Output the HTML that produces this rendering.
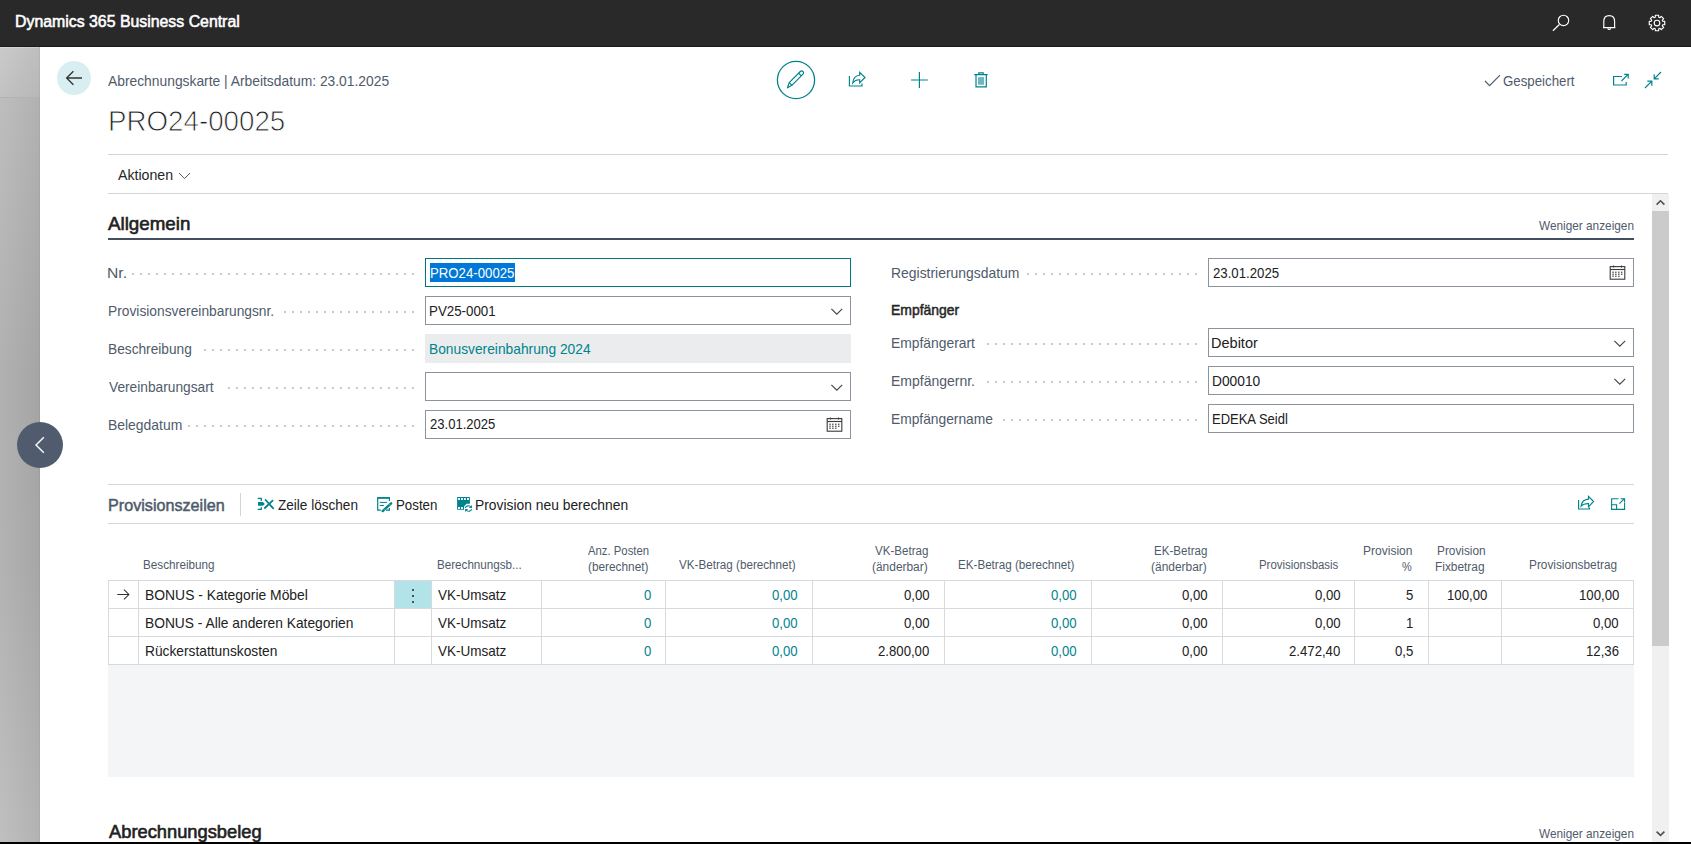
<!DOCTYPE html>
<html><head><meta charset="utf-8">
<style>
*{box-sizing:border-box;margin:0;padding:0}
html,body{width:1691px;height:844px;overflow:hidden;background:#fff;font-family:"Liberation Sans",sans-serif;color:#212121}
.a{position:absolute;white-space:nowrap;line-height:20px}
svg.a{overflow:visible}
</style></head><body>
<div class="a" style="left:0px;top:0px;width:1691px;height:46px;background:#292929"></div>
<div class="a" style="left:0px;top:46px;width:1691px;height:1px;background:#1b1b1b"></div>
<div class="a" style="left:14.51px;top:12.46px;font-size:16px;color:#fff;font-weight:400;transform-origin:0 0;transform:scaleX(0.9911);-webkit-text-stroke:0.55px #fff">Dynamics 365 Business Central</div>
<svg class="a" style="left:1550px;top:12px" width="22" height="22" viewBox="0 0 22 22"><circle cx="13.5" cy="8.4" r="5.2" fill="none" stroke="#fff" stroke-width="1.15"/><path d="M9.4 12.5 L2.9 18.8" stroke="#fff" stroke-width="1.2"/></svg>
<svg class="a" style="left:1598px;top:12px" width="22" height="22" viewBox="0 0 22 22"><path d="M5 15.6 H17.4 M5.8 15.6 V9.6 C5.8 5.8 8 3.7 11.2 3.7 C14.4 3.7 16.6 5.8 16.6 9.6 V15.6" fill="none" stroke="#fff" stroke-width="1.15"/><path d="M9.9 16.2 A1.3 1.3 0 0 0 12.5 16.2" fill="none" stroke="#fff" stroke-width="1.1"/></svg>
<svg class="a" style="left:1646px;top:12px" width="22" height="22" viewBox="0 0 22 22"><g fill="none" stroke="#fff" stroke-width="1.15" stroke-linejoin="round"><circle cx="11" cy="11" r="2.8"/><path d="M16.74 9.25 L18.73 9.36 L18.73 12.64 L16.74 12.75 L16.30 13.82 L17.63 15.30 L15.30 17.63 L13.82 16.30 L12.75 16.74 L12.64 18.73 L9.36 18.73 L9.25 16.74 L8.18 16.30 L6.70 17.63 L4.37 15.30 L5.70 13.82 L5.26 12.75 L3.27 12.64 L3.27 9.36 L5.26 9.25 L5.70 8.18 L4.37 6.70 L6.70 4.37 L8.18 5.70 L9.25 5.26 L9.36 3.27 L12.64 3.27 L12.75 5.26 L13.82 5.70 L15.30 4.37 L17.63 6.70 L16.30 8.18 Z"/></g></svg>
<div class="a" style="left:0px;top:47px;width:40px;height:797px;background:linear-gradient(to right,rgba(255,255,255,0.04),rgba(0,0,0,0.055)),linear-gradient(to bottom,#c4c4c4 0px,#bbbbbb 55px,#aeaeae 330px,#b0b0b0 520px,#bdbdbd 797px)"></div>
<div class="a" style="left:0px;top:47px;width:40px;height:50px;background:rgba(255,255,255,0.07)"></div>
<div class="a" style="left:0px;top:97px;width:40px;height:1px;background:#b2b2b2"></div>
<div class="a" style="left:39px;top:47px;width:1px;height:797px;background:rgba(0,0,0,0.04)"></div>
<div class="a" style="left:0px;top:47px;width:39px;height:1px;background:rgba(255,255,255,0.25)"></div>
<div class="a" style="left:17px;top:422px;width:46px;height:46px;border-radius:50%;background:#505c6d"></div>
<svg class="a" style="left:17px;top:422px" width="46" height="46" viewBox="0 0 46 46"><path d="M26.8 15.2 L19 23 L26.8 30.8" fill="none" stroke="#fff" stroke-width="1.4"/></svg>
<div class="a" style="left:57px;top:61px;width:34px;height:34px;border-radius:50%;background:#d8eef1"></div>
<svg class="a" style="left:57px;top:61px" width="34" height="34" viewBox="0 0 34 34"><path d="M9.6 17 H25 M16.4 10.2 L9.6 17 L16.4 23.8" fill="none" stroke="#333" stroke-width="1.3"/></svg>
<div class="a" style="left:108.30px;top:70.58px;font-size:13.9px;color:#4f5b6b;font-weight:400;transform-origin:0 0;transform:scaleX(0.9954);">Abrechnungskarte | Arbeitsdatum: 23.01.2025</div>
<div class="a" style="left:108px;top:104px;font-size:29.5px;line-height:34px;color:#1f1f1f;-webkit-text-stroke:0.9px #fff;transform-origin:0 0;transform:scaleX(0.94)">PRO24-00025</div>
<svg class="a" style="left:776px;top:60px" width="40" height="40" viewBox="0 0 40 40"><circle cx="20" cy="20" r="18.6" fill="none" stroke="#00838c" stroke-width="1.3"/><g fill="none" stroke="#00838c" stroke-width="1.2" stroke-linejoin="round"><path d="M11.5 27.8 L13.2 22.6 L24.3 11.5 A1.9 1.9 0 0 1 27 14.2 L15.9 25.3 Z"/><path d="M13.2 22.6 L15.9 25.3 M22.6 13.2 L25.3 15.9"/></g></svg>
<svg class="a" style="left:846px;top:70px" width="22" height="20" viewBox="0 0 22 20"><g fill="none" stroke="#00838c" stroke-width="1.15" stroke-linejoin="miter"><path d="M3.4 6 V16 H16 V13.4"/><path d="M19 7.5 L13.7 2.3 V5.3 C9.6 5.5 7.2 8.4 6.7 13 C8.6 10.6 11 9.6 13.7 9.8 V12.8 Z"/></g></svg>
<svg class="a" style="left:909px;top:70px" width="20" height="20" viewBox="0 0 20 20"><path d="M2 10 H18.8 M10.4 2 V18" stroke="#00838c" stroke-width="1.2"/></svg>
<svg class="a" style="left:971px;top:70px" width="20" height="20" viewBox="0 0 20 20"><g fill="none" stroke="#00838c" stroke-width="1.2"><path d="M3.3 4.6 H16.7 M7.8 4.3 V2.8 H12.2 V4.3 M5 4.6 V16.8 H15.3 V4.6"/></g><rect x="7" y="7.1" width="6" height="7.7" fill="#6cb9bd"/></svg>
<svg class="a" style="left:1483px;top:73px" width="20" height="16" viewBox="0 0 20 16"><path d="M2 8 L6.6 12.6 L17 2.2" fill="none" stroke="#4f5b6b" stroke-width="1.2"/></svg>
<div class="a" style="left:1503.00px;top:70.88px;font-size:14.2px;color:#4f5b6b;font-weight:400;transform-origin:0 0;transform:scaleX(0.9351);">Gespeichert</div>
<svg class="a" style="left:1610px;top:70px" width="22" height="20" viewBox="0 0 22 20"><g fill="none" stroke="#00838c" stroke-width="1.2"><path d="M12 6.5 H3.6 V15 H16.2 V12"/><path d="M11.5 11 L17.8 4.7 M14.2 4.4 H18.2 V8.4"/></g></svg>
<svg class="a" style="left:1642px;top:69px" width="22" height="22" viewBox="0 0 22 22"><g fill="none" stroke="#00838c" stroke-width="1.2"><path d="M19 3 L12.2 9.8 M12.2 5.3 V9.8 H16.7"/><path d="M3 19 L9.8 12.2 M5.3 12.2 H9.8 V16.7"/></g></svg>
<div class="a" style="left:108px;top:154px;width:1560px;height:1px;background:#d2d6db"></div>
<div class="a" style="left:117.50px;top:164.85px;font-size:14.3px;color:#262626;font-weight:400;transform-origin:0 0;transform:scaleX(0.9909);">Aktionen</div>
<svg class="a" style="left:178px;top:171px" width="13" height="9" viewBox="0 0 13 9"><path d="M1 2 L6.5 7.6 L12 2" fill="none" stroke="#555" stroke-width="1"/></svg>
<div class="a" style="left:108px;top:193px;width:1560px;height:1px;background:#d2d6db"></div>
<div class="a" style="left:1652px;top:194px;width:17px;height:650px;background:#f0f0f0"></div>
<div class="a" style="left:1652px;top:211px;width:17px;height:435px;background:#cbcbcb"></div>
<svg class="a" style="left:1652px;top:194px" width="17" height="17" viewBox="0 0 17 17"><path d="M4.6 10.6 L8.5 6.8 L12.4 10.6" fill="none" stroke="#505050" stroke-width="1.6"/></svg>
<svg class="a" style="left:1652px;top:825px" width="17" height="17" viewBox="0 0 17 17"><path d="M4.6 6.6 L8.5 10.4 L12.4 6.6" fill="none" stroke="#505050" stroke-width="1.6"/></svg>
<div class="a" style="left:108.30px;top:214.36px;font-size:18.6px;color:#212121;font-weight:400;transform-origin:0 0;transform:scaleX(1.0086);-webkit-text-stroke:0.6px #212121">Allgemein</div>
<div class="a" style="left:1539.10px;top:216.03px;font-size:12.6px;color:#4f5b6b;font-weight:400;transform-origin:0 0;transform:scaleX(0.9376);">Weniger anzeigen</div>
<div class="a" style="left:108px;top:238px;width:1526px;height:2px;background:#424f61"></div>
<div class="a" style="left:107.41px;top:262.85px;font-size:14.3px;color:#4f5b6b;font-weight:400;transform-origin:0 0;transform:scaleX(1.0938);">Nr.</div>
<div class="a" style="left:132px;top:273px;width:282px;height:2px;background-image:linear-gradient(to right,#c6c9ce 2px,transparent 2px);background-size:8px 2px;background-repeat:repeat-x"></div>
<div class="a" style="left:107.54px;top:300.85px;font-size:14.3px;color:#4f5b6b;font-weight:400;transform-origin:0 0;transform:scaleX(0.9637);">Provisionsvereinbarungsnr.</div>
<div class="a" style="left:284px;top:311px;width:130px;height:2px;background-image:linear-gradient(to right,#c6c9ce 2px,transparent 2px);background-size:8px 2px;background-repeat:repeat-x"></div>
<div class="a" style="left:107.54px;top:338.85px;font-size:14.3px;color:#4f5b6b;font-weight:400;transform-origin:0 0;transform:scaleX(0.9593);">Beschreibung</div>
<div class="a" style="left:204px;top:349px;width:210px;height:2px;background-image:linear-gradient(to right,#c6c9ce 2px,transparent 2px);background-size:8px 2px;background-repeat:repeat-x"></div>
<div class="a" style="left:108.50px;top:376.85px;font-size:14.3px;color:#4f5b6b;font-weight:400;transform-origin:0 0;transform:scaleX(0.9606);">Vereinbarungsart</div>
<div class="a" style="left:228px;top:387px;width:186px;height:2px;background-image:linear-gradient(to right,#c6c9ce 2px,transparent 2px);background-size:8px 2px;background-repeat:repeat-x"></div>
<div class="a" style="left:107.53px;top:414.85px;font-size:14.3px;color:#4f5b6b;font-weight:400;transform-origin:0 0;transform:scaleX(0.9733);">Belegdatum</div>
<div class="a" style="left:188px;top:425px;width:226px;height:2px;background-image:linear-gradient(to right,#c6c9ce 2px,transparent 2px);background-size:8px 2px;background-repeat:repeat-x"></div>
<div class="a" style="left:425px;top:258px;width:426px;height:29px;background:#fff;border:1px solid #00767e"></div>
<div class="a" style="left:430px;top:263px;width:85px;height:19px;background:#0078d7"></div>
<div class="a" style="left:429.58px;top:262.81px;font-size:14.4px;color:#fff;font-weight:400;transform-origin:0 0;transform:scaleX(0.9176);">PRO24-00025</div>
<div class="a" style="left:425px;top:296px;width:426px;height:29px;background:#fff;border:1px solid #8a939e"></div>
<div class="a" style="left:429.17px;top:301.11px;font-size:14.4px;color:#212121;font-weight:400;transform-origin:0 0;transform:scaleX(0.9254);">PV25-0001</div>
<svg class="a" style="left:830px;top:307px" width="14" height="9" viewBox="0 0 14 9"><path d="M1.4 1.8 L6.8 7.2 L12.2 1.8" fill="none" stroke="#444" stroke-width="1.15"/></svg>
<div class="a" style="left:425px;top:334px;width:426px;height:29px;background:#ebecee"></div>
<div class="a" style="left:429.14px;top:339.01px;font-size:14.4px;color:#00838c;font-weight:400;transform-origin:0 0;transform:scaleX(0.9571);">Bonusvereinbahrung 2024</div>
<div class="a" style="left:425px;top:372px;width:426px;height:29px;background:#fff;border:1px solid #8a939e"></div>
<svg class="a" style="left:830px;top:383px" width="14" height="9" viewBox="0 0 14 9"><path d="M1.4 1.8 L6.8 7.2 L12.2 1.8" fill="none" stroke="#444" stroke-width="1.15"/></svg>
<div class="a" style="left:425px;top:410px;width:426px;height:29px;background:#fff;border:1px solid #8a939e"></div>
<div class="a" style="left:430.00px;top:414.41px;font-size:14.4px;color:#212121;font-weight:400;transform-origin:0 0;transform:scaleX(0.9069);">23.01.2025</div>
<svg class="a" style="left:826px;top:417px" width="17" height="15" viewBox="0 0 17 15"><g fill="none" stroke="#3a3a3a" stroke-width="1.1"><rect x="1.2" y="1.6" width="14.6" height="12.6"/><path d="M1.2 4.5 H15.8"/><path d="M4.5 0.5 V2.5 M12.5 0.5 V2.5"/></g><g fill="#3a3a3a"><rect x="3.4" y="6.6" width="1.3" height="1.3"/><rect x="6.2" y="6.6" width="1.3" height="1.3"/><rect x="9.2" y="6.6" width="1.3" height="1.3"/><rect x="12.1" y="6.6" width="1.3" height="1.3"/><rect x="3.4" y="8.6" width="1.3" height="1.3"/><rect x="6.2" y="8.6" width="1.3" height="1.3"/><rect x="9.2" y="8.6" width="1.3" height="1.3"/><rect x="12.1" y="8.6" width="1.3" height="1.3"/><rect x="3.4" y="10.6" width="1.3" height="1.3"/><rect x="6.2" y="10.6" width="1.3" height="1.3"/><rect x="9.2" y="10.6" width="1.3" height="1.3"/></g></svg>
<div class="a" style="left:890.73px;top:263.05px;font-size:14.3px;color:#4f5b6b;font-weight:400;transform-origin:0 0;transform:scaleX(0.9738);">Registrierungsdatum</div>
<div class="a" style="left:1027px;top:273px;width:170px;height:2px;background-image:linear-gradient(to right,#c6c9ce 2px,transparent 2px);background-size:8px 2px;background-repeat:repeat-x"></div>
<div class="a" style="left:1208px;top:258px;width:426px;height:29px;background:#fff;border:1px solid #8a939e"></div>
<div class="a" style="left:1212.50px;top:263.21px;font-size:14.4px;color:#212121;font-weight:400;transform-origin:0 0;transform:scaleX(0.9181);">23.01.2025</div>
<svg class="a" style="left:1609px;top:265px" width="17" height="15" viewBox="0 0 17 15"><g fill="none" stroke="#3a3a3a" stroke-width="1.1"><rect x="1.2" y="1.6" width="14.6" height="12.6"/><path d="M1.2 4.5 H15.8"/><path d="M4.5 0.5 V2.5 M12.5 0.5 V2.5"/></g><g fill="#3a3a3a"><rect x="3.4" y="6.6" width="1.3" height="1.3"/><rect x="6.2" y="6.6" width="1.3" height="1.3"/><rect x="9.2" y="6.6" width="1.3" height="1.3"/><rect x="12.1" y="6.6" width="1.3" height="1.3"/><rect x="3.4" y="8.6" width="1.3" height="1.3"/><rect x="6.2" y="8.6" width="1.3" height="1.3"/><rect x="9.2" y="8.6" width="1.3" height="1.3"/><rect x="12.1" y="8.6" width="1.3" height="1.3"/><rect x="3.4" y="10.6" width="1.3" height="1.3"/><rect x="6.2" y="10.6" width="1.3" height="1.3"/><rect x="9.2" y="10.6" width="1.3" height="1.3"/></g></svg>
<div class="a" style="left:890.72px;top:299.85px;font-size:14.3px;color:#262626;font-weight:400;transform-origin:0 0;transform:scaleX(0.9754);-webkit-text-stroke:0.5px #262626">Empfänger</div>
<div class="a" style="left:890.73px;top:333.25px;font-size:14.3px;color:#4f5b6b;font-weight:400;transform-origin:0 0;transform:scaleX(0.9686);">Empfängerart</div>
<div class="a" style="left:987px;top:343px;width:210px;height:2px;background-image:linear-gradient(to right,#c6c9ce 2px,transparent 2px);background-size:8px 2px;background-repeat:repeat-x"></div>
<div class="a" style="left:1208px;top:328px;width:426px;height:29px;background:#fff;border:1px solid #8a939e"></div>
<div class="a" style="left:1211.49px;top:333.21px;font-size:14.4px;color:#212121;font-weight:400;transform-origin:0 0;transform:scaleX(1.0089);">Debitor</div>
<svg class="a" style="left:1613px;top:339px" width="14" height="9" viewBox="0 0 14 9"><path d="M1.4 1.8 L6.8 7.2 L12.2 1.8" fill="none" stroke="#444" stroke-width="1.15"/></svg>
<div class="a" style="left:890.72px;top:371.05px;font-size:14.3px;color:#4f5b6b;font-weight:400;transform-origin:0 0;transform:scaleX(0.9786);">Empfängernr.</div>
<div class="a" style="left:987px;top:381px;width:210px;height:2px;background-image:linear-gradient(to right,#c6c9ce 2px,transparent 2px);background-size:8px 2px;background-repeat:repeat-x"></div>
<div class="a" style="left:1208px;top:366px;width:426px;height:29px;background:#fff;border:1px solid #8a939e"></div>
<div class="a" style="left:1212.14px;top:371.01px;font-size:14.4px;color:#212121;font-weight:400;transform-origin:0 0;transform:scaleX(0.9571);">D00010</div>
<svg class="a" style="left:1613px;top:377px" width="14" height="9" viewBox="0 0 14 9"><path d="M1.4 1.8 L6.8 7.2 L12.2 1.8" fill="none" stroke="#444" stroke-width="1.15"/></svg>
<div class="a" style="left:890.74px;top:409.05px;font-size:14.3px;color:#4f5b6b;font-weight:400;transform-origin:0 0;transform:scaleX(0.9644);">Empfängername</div>
<div class="a" style="left:1003px;top:419px;width:194px;height:2px;background-image:linear-gradient(to right,#c6c9ce 2px,transparent 2px);background-size:8px 2px;background-repeat:repeat-x"></div>
<div class="a" style="left:1208px;top:404px;width:426px;height:29px;background:#fff;border:1px solid #8a939e"></div>
<div class="a" style="left:1212.20px;top:409.01px;font-size:14.4px;color:#212121;font-weight:400;transform-origin:0 0;transform:scaleX(0.9024);">EDEKA Seidl</div>
<div class="a" style="left:108px;top:484px;width:1526px;height:1px;background:#d2d6db"></div>
<div class="a" style="left:107.50px;top:495.39px;font-size:16.2px;color:#4f5b6b;font-weight:400;transform-origin:0 0;transform:scaleX(0.9983);-webkit-text-stroke:0.5px #4f5b6b">Provisionszeilen</div>
<div class="a" style="left:240px;top:493px;width:1px;height:23px;background:#d2d6db"></div>
<svg class="a" style="left:254px;top:494px" width="22" height="20" viewBox="0 0 22 20"><g fill="none" stroke="#00838c" stroke-width="1.3" stroke-linecap="round"><path d="M4.2 4.4 H7.3 V6.4 M7.3 13.6 V15.4 H4.2"/></g><path d="M4 8 H8.8 L10.9 9.9 L8.8 11.8 H4 Z" fill="#00838c"/><g fill="none" stroke="#00838c" stroke-width="1.8" stroke-linecap="round"><path d="M11.6 6 L19.2 14.3 M18.6 6.7 L10.8 14"/></g></svg>
<div class="a" style="left:278.30px;top:495.05px;font-size:14.3px;color:#212121;font-weight:400;transform-origin:0 0;transform:scaleX(0.9488);">Zeile löschen</div>
<svg class="a" style="left:374px;top:494px" width="22" height="20" viewBox="0 0 22 20"><g fill="none" stroke="#00838c" stroke-width="1.2"><path d="M6.9 16.2 H3.7 V3.8 H15.4 V6.9"/><path d="M12 16.2 H15.4 V14"/></g><path d="M3.1 3.1 H15.9 V4.7 H3.1 Z" fill="#00838c"/><g stroke="#00838c" stroke-width="1" stroke-linecap="round"><path d="M6.2 8.4 H12.7 M6.2 11.5 H9.5"/></g><path d="M8.7 17.1 L17.1 9.3" stroke="#00838c" stroke-width="2.4" stroke-linecap="round"/><path d="M10.3 14.9 L11.3 15.9 M15.2 10.3 L16.2 11.3" stroke="#fff" stroke-width="0.5"/></svg>
<div class="a" style="left:396.07px;top:495.05px;font-size:14.3px;color:#212121;font-weight:400;transform-origin:0 0;transform:scaleX(0.9302);">Posten</div>
<svg class="a" style="left:454px;top:494px" width="22" height="20" viewBox="0 0 22 20"><path d="M3.1 3.6 Q3.1 3.1 3.6 3.1 H15.4 Q15.9 3.1 15.9 3.6 V9.7 H12.6 L10 12.6 V15.8 H3.6 Q3.1 15.8 3.1 15.3 Z" fill="#00838c"/><g fill="#fff"><rect x="4.05" y="4.05" width="1.9" height="1.9"/><rect x="7" y="4.05" width="1.9" height="1.9"/><rect x="9.95" y="4.05" width="1.9" height="1.9"/><rect x="13" y="4.05" width="1.9" height="1.9"/><rect x="4.05" y="13.05" width="1.9" height="1.9"/><rect x="7" y="13.05" width="1.9" height="1.9"/></g><g fill="none" stroke="#00838c" stroke-width="1.1" stroke-linecap="round"><path d="M11.4 13.5 C12.4 11.7 14.6 11.3 16.3 12.4"/><path d="M17.6 15.5 C16.6 17.3 14.4 17.7 12.7 16.6"/></g><path d="M17.9 10.9 V13.9 H14.9 Z M11.1 18.1 V15.1 H14.1 Z" fill="#00838c"/></svg>
<div class="a" style="left:475.03px;top:495.05px;font-size:14.3px;color:#212121;font-weight:400;transform-origin:0 0;transform:scaleX(0.9682);">Provision neu berechnen</div>
<svg class="a" style="left:1576px;top:494px" width="20" height="18" viewBox="0 0 20 18"><g fill="none" stroke="#00838c" stroke-width="1.15"><path d="M2.6 6 V15 H13.5 V13.4"/><path d="M17.5 7.5 L12.5 2.4 V5.1 C8.6 5.4 5.7 8 5.1 12 C7.1 10 9.6 9.4 12.5 9.6 V12.8 Z"/></g></svg>
<svg class="a" style="left:1609px;top:496px" width="18" height="16" viewBox="0 0 18 16"><g fill="none" stroke="#00838c" stroke-width="1.1"><path d="M9.5 2.7 H2.6 V13.4 H15.6 V6.5"/><path d="M2.6 8.7 H7.6 V13.4"/><path d="M10.4 7.7 L15.2 2.9 M11.6 2.7 H15.6 V6.3"/></g></svg>
<div class="a" style="left:108px;top:523px;width:1526px;height:1px;background:#d2d6db"></div>
<div class="a" style="left:143.26px;top:554.57px;font-size:12.5px;color:#4f5b6b;font-weight:400;transform-origin:0 0;transform:scaleX(0.9360);">Beschreibung</div>
<div class="a" style="left:436.57px;top:554.57px;font-size:12.5px;color:#4f5b6b;font-weight:400;transform-origin:0 0;transform:scaleX(0.9303);">Berechnungsb...</div>
<div class="a" style="left:588.30px;top:541.17px;font-size:12.5px;color:#4f5b6b;font-weight:400;transform-origin:0 0;transform:scaleX(0.9060);">Anz. Posten</div>
<div class="a" style="left:588.45px;top:557.07px;font-size:12.5px;color:#4f5b6b;font-weight:400;transform-origin:0 0;transform:scaleX(0.9460);">(berechnet)</div>
<div class="a" style="left:679.00px;top:554.57px;font-size:12.5px;color:#4f5b6b;font-weight:400;transform-origin:0 0;transform:scaleX(0.9328);">VK-Betrag (berechnet)</div>
<div class="a" style="left:874.80px;top:541.17px;font-size:12.5px;color:#4f5b6b;font-weight:400;transform-origin:0 0;transform:scaleX(0.9263);">VK-Betrag</div>
<div class="a" style="left:872.25px;top:557.07px;font-size:12.5px;color:#4f5b6b;font-weight:400;transform-origin:0 0;transform:scaleX(0.9544);">(änderbar)</div>
<div class="a" style="left:957.87px;top:554.57px;font-size:12.5px;color:#4f5b6b;font-weight:400;transform-origin:0 0;transform:scaleX(0.9306);">EK-Betrag (berechnet)</div>
<div class="a" style="left:1153.78px;top:541.17px;font-size:12.5px;color:#4f5b6b;font-weight:400;transform-origin:0 0;transform:scaleX(0.9250);">EK-Betrag</div>
<div class="a" style="left:1151.04px;top:557.07px;font-size:12.5px;color:#4f5b6b;font-weight:400;transform-origin:0 0;transform:scaleX(0.9561);">(änderbar)</div>
<div class="a" style="left:1258.59px;top:554.57px;font-size:12.5px;color:#4f5b6b;font-weight:400;transform-origin:0 0;transform:scaleX(0.9128);">Provisionsbasis</div>
<div class="a" style="left:1362.54px;top:541.17px;font-size:12.5px;color:#4f5b6b;font-weight:400;transform-origin:0 0;transform:scaleX(0.9620);">Provision</div>
<div class="a" style="left:1402.00px;top:557.07px;font-size:12.5px;color:#4f5b6b;font-weight:400;transform-origin:0 0;transform:scaleX(0.8727);">%</div>
<div class="a" style="left:1436.65px;top:541.17px;font-size:12.5px;color:#4f5b6b;font-weight:400;transform-origin:0 0;transform:scaleX(0.9460);">Provision</div>
<div class="a" style="left:1435.45px;top:557.07px;font-size:12.5px;color:#4f5b6b;font-weight:400;transform-origin:0 0;transform:scaleX(0.9510);">Fixbetrag</div>
<div class="a" style="left:1528.65px;top:554.57px;font-size:12.5px;color:#4f5b6b;font-weight:400;transform-origin:0 0;transform:scaleX(0.9457);">Provisionsbetrag</div>
<div class="a" style="left:394px;top:580px;width:37px;height:28px;background:#b2e3e8"></div>
<div class="a" style="left:108px;top:580px;width:1526px;height:1px;background:#d6d9dd"></div>
<div class="a" style="left:108px;top:608px;width:1526px;height:1px;background:#d6d9dd"></div>
<div class="a" style="left:108px;top:636px;width:1526px;height:1px;background:#d6d9dd"></div>
<div class="a" style="left:108px;top:664px;width:1526px;height:1px;background:#d6d9dd"></div>
<div class="a" style="left:108px;top:580px;width:1px;height:85px;background:#d6d9dd"></div>
<div class="a" style="left:138px;top:580px;width:1px;height:85px;background:#d6d9dd"></div>
<div class="a" style="left:394px;top:580px;width:1px;height:85px;background:#d6d9dd"></div>
<div class="a" style="left:431px;top:580px;width:1px;height:85px;background:#d6d9dd"></div>
<div class="a" style="left:541px;top:580px;width:1px;height:85px;background:#d6d9dd"></div>
<div class="a" style="left:665px;top:580px;width:1px;height:85px;background:#d6d9dd"></div>
<div class="a" style="left:812px;top:580px;width:1px;height:85px;background:#d6d9dd"></div>
<div class="a" style="left:944px;top:580px;width:1px;height:85px;background:#d6d9dd"></div>
<div class="a" style="left:1091px;top:580px;width:1px;height:85px;background:#d6d9dd"></div>
<div class="a" style="left:1222px;top:580px;width:1px;height:85px;background:#d6d9dd"></div>
<div class="a" style="left:1354px;top:580px;width:1px;height:85px;background:#d6d9dd"></div>
<div class="a" style="left:1428px;top:580px;width:1px;height:85px;background:#d6d9dd"></div>
<div class="a" style="left:1501px;top:580px;width:1px;height:85px;background:#d6d9dd"></div>
<div class="a" style="left:1633px;top:580px;width:1px;height:85px;background:#d6d9dd"></div>
<div class="a" style="left:108px;top:665px;width:1526px;height:112px;background:#f4f5f7"></div>
<svg class="a" style="left:115px;top:588px" width="16" height="14" viewBox="0 0 16 14"><path d="M2.3 6.5 H13.8 M9 1.6 L13.9 6.5 L9 11.4" fill="none" stroke="#333" stroke-width="1.05"/></svg>
<div class="a" style="left:412px;top:588.9px;width:2px;height:2px;background:#222;border-radius:1px"></div>
<div class="a" style="left:412px;top:594.9px;width:2px;height:2px;background:#222;border-radius:1px"></div>
<div class="a" style="left:412px;top:601px;width:2px;height:2px;background:#222;border-radius:1px"></div>
<div class="a" style="left:144.73px;top:585.01px;font-size:14.4px;color:#212121;font-weight:400;transform-origin:0 0;transform:scaleX(0.9653);">BONUS - Kategorie Möbel</div>
<div class="a" style="left:438.10px;top:585.01px;font-size:14.4px;color:#212121;font-weight:400;transform-origin:0 0;transform:scaleX(0.9389);">VK-Umsatz</div>
<div class="a" style="left:643.98px;top:585.01px;font-size:14.4px;color:#00838c;font-weight:400;transform-origin:0 0;transform:scaleX(0.9150);">0</div>
<div class="a" style="left:772.18px;top:585.01px;font-size:14.4px;color:#00838c;font-weight:400;transform-origin:0 0;transform:scaleX(0.9150);">0,00</div>
<div class="a" style="left:903.68px;top:585.01px;font-size:14.4px;color:#212121;font-weight:400;transform-origin:0 0;transform:scaleX(0.9150);">0,00</div>
<div class="a" style="left:1050.68px;top:585.01px;font-size:14.4px;color:#00838c;font-weight:400;transform-origin:0 0;transform:scaleX(0.9150);">0,00</div>
<div class="a" style="left:1182.38px;top:585.01px;font-size:14.4px;color:#212121;font-weight:400;transform-origin:0 0;transform:scaleX(0.9150);">0,00</div>
<div class="a" style="left:1314.68px;top:585.01px;font-size:14.4px;color:#212121;font-weight:400;transform-origin:0 0;transform:scaleX(0.9150);">0,00</div>
<div class="a" style="left:1405.68px;top:585.01px;font-size:14.4px;color:#212121;font-weight:400;transform-origin:0 0;transform:scaleX(0.9150);">5</div>
<div class="a" style="left:1446.64px;top:585.01px;font-size:14.4px;color:#212121;font-weight:400;transform-origin:0 0;transform:scaleX(0.9150);">100,00</div>
<div class="a" style="left:1578.64px;top:585.01px;font-size:14.4px;color:#212121;font-weight:400;transform-origin:0 0;transform:scaleX(0.9150);">100,00</div>
<div class="a" style="left:144.74px;top:612.61px;font-size:14.4px;color:#212121;font-weight:400;transform-origin:0 0;transform:scaleX(0.9579);">BONUS - Alle anderen Kategorien</div>
<div class="a" style="left:438.10px;top:612.61px;font-size:14.4px;color:#212121;font-weight:400;transform-origin:0 0;transform:scaleX(0.9389);">VK-Umsatz</div>
<div class="a" style="left:643.98px;top:612.61px;font-size:14.4px;color:#00838c;font-weight:400;transform-origin:0 0;transform:scaleX(0.9150);">0</div>
<div class="a" style="left:772.18px;top:612.61px;font-size:14.4px;color:#00838c;font-weight:400;transform-origin:0 0;transform:scaleX(0.9150);">0,00</div>
<div class="a" style="left:903.68px;top:612.61px;font-size:14.4px;color:#212121;font-weight:400;transform-origin:0 0;transform:scaleX(0.9150);">0,00</div>
<div class="a" style="left:1050.68px;top:612.61px;font-size:14.4px;color:#00838c;font-weight:400;transform-origin:0 0;transform:scaleX(0.9150);">0,00</div>
<div class="a" style="left:1182.38px;top:612.61px;font-size:14.4px;color:#212121;font-weight:400;transform-origin:0 0;transform:scaleX(0.9150);">0,00</div>
<div class="a" style="left:1314.68px;top:612.61px;font-size:14.4px;color:#212121;font-weight:400;transform-origin:0 0;transform:scaleX(0.9150);">0,00</div>
<div class="a" style="left:1405.68px;top:612.61px;font-size:14.4px;color:#212121;font-weight:400;transform-origin:0 0;transform:scaleX(0.9150);">1</div>
<div class="a" style="left:1593.28px;top:612.61px;font-size:14.4px;color:#212121;font-weight:400;transform-origin:0 0;transform:scaleX(0.9150);">0,00</div>
<div class="a" style="left:144.74px;top:640.81px;font-size:14.4px;color:#212121;font-weight:400;transform-origin:0 0;transform:scaleX(0.9562);">Rückerstattunskosten</div>
<div class="a" style="left:438.10px;top:640.81px;font-size:14.4px;color:#212121;font-weight:400;transform-origin:0 0;transform:scaleX(0.9389);">VK-Umsatz</div>
<div class="a" style="left:643.98px;top:640.81px;font-size:14.4px;color:#00838c;font-weight:400;transform-origin:0 0;transform:scaleX(0.9150);">0</div>
<div class="a" style="left:772.18px;top:640.81px;font-size:14.4px;color:#00838c;font-weight:400;transform-origin:0 0;transform:scaleX(0.9150);">0,00</div>
<div class="a" style="left:878.06px;top:640.81px;font-size:14.4px;color:#212121;font-weight:400;transform-origin:0 0;transform:scaleX(0.9150);">2.800,00</div>
<div class="a" style="left:1050.68px;top:640.81px;font-size:14.4px;color:#00838c;font-weight:400;transform-origin:0 0;transform:scaleX(0.9150);">0,00</div>
<div class="a" style="left:1182.38px;top:640.81px;font-size:14.4px;color:#212121;font-weight:400;transform-origin:0 0;transform:scaleX(0.9150);">0,00</div>
<div class="a" style="left:1289.06px;top:640.81px;font-size:14.4px;color:#212121;font-weight:400;transform-origin:0 0;transform:scaleX(0.9150);">2.472,40</div>
<div class="a" style="left:1394.70px;top:640.81px;font-size:14.4px;color:#212121;font-weight:400;transform-origin:0 0;transform:scaleX(0.9150);">0,5</div>
<div class="a" style="left:1585.96px;top:640.81px;font-size:14.4px;color:#212121;font-weight:400;transform-origin:0 0;transform:scaleX(0.9150);">12,36</div>
<div class="a" style="left:108.50px;top:822.13px;font-size:17.8px;color:#212121;font-weight:400;transform-origin:0 0;transform:scaleX(1.0291);-webkit-text-stroke:0.6px #212121">Abrechnungsbeleg</div>
<div class="a" style="left:1539.10px;top:823.63px;font-size:12.6px;color:#4f5b6b;font-weight:400;transform-origin:0 0;transform:scaleX(0.9376);">Weniger anzeigen</div>
<div class="a" style="left:0px;top:842px;width:1691px;height:2px;background:#000"></div>
</body></html>
